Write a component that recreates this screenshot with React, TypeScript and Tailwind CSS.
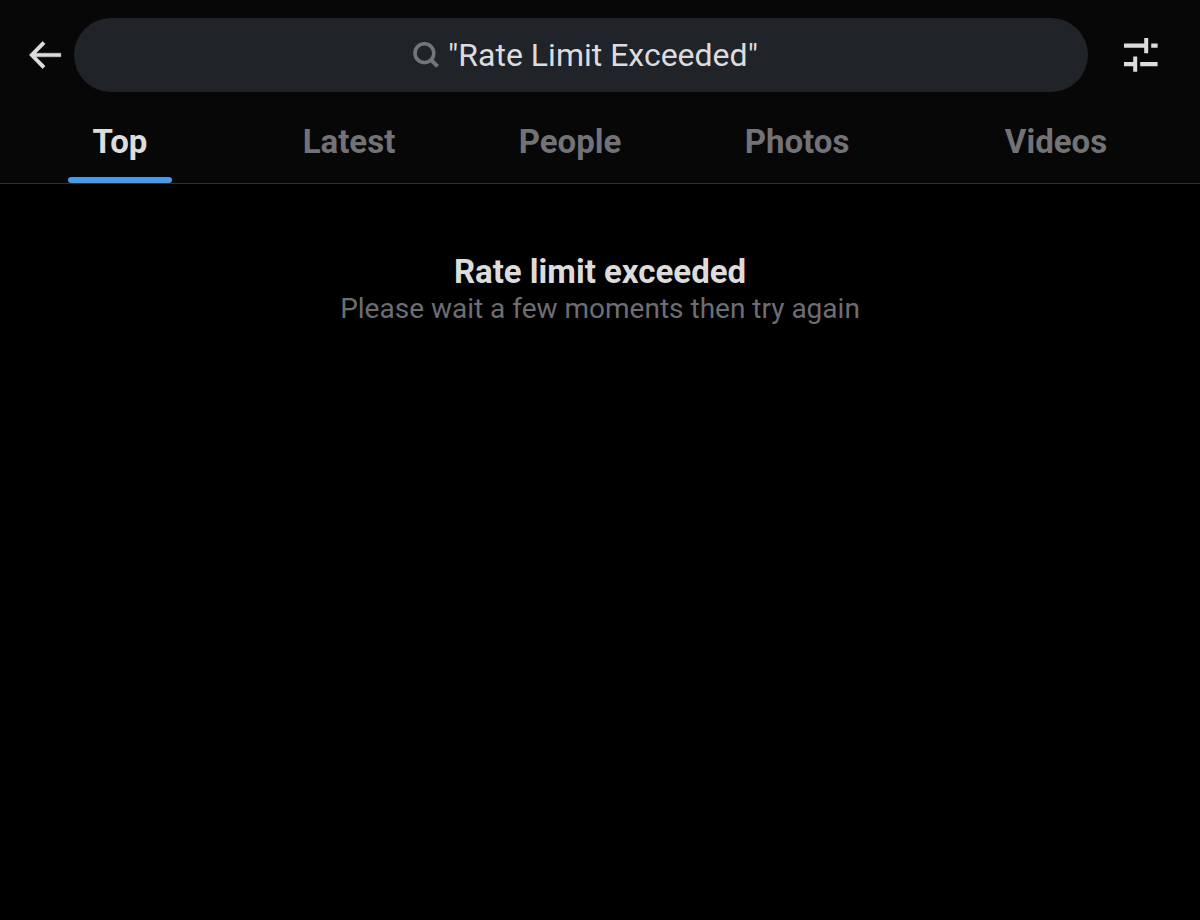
import { useState } from "react";

const TABS = ["Top", "Latest", "People", "Photos", "Videos"];

function BackIcon() {
  return (
    <svg viewBox="0 0 24 24" className="size-11" fill="currentColor" stroke="currentColor" strokeWidth="0.2" aria-hidden="true">
      <path d="M7.614 13l5.043 5.04-1.414 1.42L3.986 12l7.257-7.46 1.414 1.42L7.614 11H21.2v2H7.614z" />
    </svg>
  );
}

function SearchIcon() {
  return (
    <svg viewBox="0 0 26 26" className="size-[26px] shrink-0" fill="none" stroke="currentColor" aria-hidden="true">
      <circle cx="11.4" cy="11.2" r="9.4" strokeWidth="3.6" />
      <path d="M17.8 17.8l6.8 6.6" strokeWidth="4" />
    </svg>
  );
}

function FilterIcon() {
  return (
    <svg viewBox="0 0 34 34" className="size-[34px]" fill="currentColor" aria-hidden="true">
      <path d="M0 5.4h20.2V0h4v15.2h-4V9.8H0zM27.2 5.4h6.4v4.4h-6.4zM0 24h9.2v-5.6h4v15.4h-4V28.2H0zM16.2 24h17.4v4.2H16.2z" />
    </svg>
  );
}

export default function App() {
  const [query, setQuery] = useState('"Rate Limit Exceeded"');
  const [active, setActive] = useState("Top");

  return (
    <div className="min-h-screen bg-black font-[Roboto,sans-serif] text-[#dcdcdc]">
      <header className="border-b border-[#303031] bg-[#070707] pt-[18px]">
        <div className="flex items-center gap-2 pr-[42px] pl-[22px]">
          <button type="button" aria-label="Back">
            <BackIcon />
          </button>
          <label className="flex h-[74px] min-w-0 flex-1 items-center justify-center gap-[9px] rounded-full bg-[#202327] pl-[9px] text-[#71767b]">
            <SearchIcon />
            <input
              type="text"
              aria-label="Search"
              value={query}
              onChange={(e) => setQuery(e.target.value)}
              className="field-sizing-content bg-transparent text-[32px] leading-10 text-[#dcdce0] outline-none"
            />
          </label>
          <button type="button" aria-label="Search filters" className="ml-7">
            <FilterIcon />
          </button>
        </div>
        <nav className="grid grid-cols-[240fr_218fr_224fr_230fr_288fr]" role="tablist">
          {TABS.map((tab) => (
            <button
              key={tab}
              type="button"
              role="tab"
              aria-selected={tab === active}
              onClick={() => setActive(tab)}
              className={`flex flex-col items-center pt-[30px] text-[33px] leading-10 font-bold ${tab === active ? "text-[#dcdcdc]" : "text-[#727277]"}`}
            >
              {tab}
              <span className={`mt-[15px] h-1.5 w-[104px] rounded-full ${tab === active ? "bg-[#4a99e9]" : "bg-transparent"}`} />
            </button>
          ))}
        </nav>
      </header>
      <main className="px-8 pt-[68px] text-center">
        <h1 className="text-[33px] leading-10 font-bold">Rate limit exceeded</h1>
        <p className="text-[28px] leading-[34px] text-[#6e6e72]">Please wait a few moments then try again</p>
      </main>
    </div>
  );
}
